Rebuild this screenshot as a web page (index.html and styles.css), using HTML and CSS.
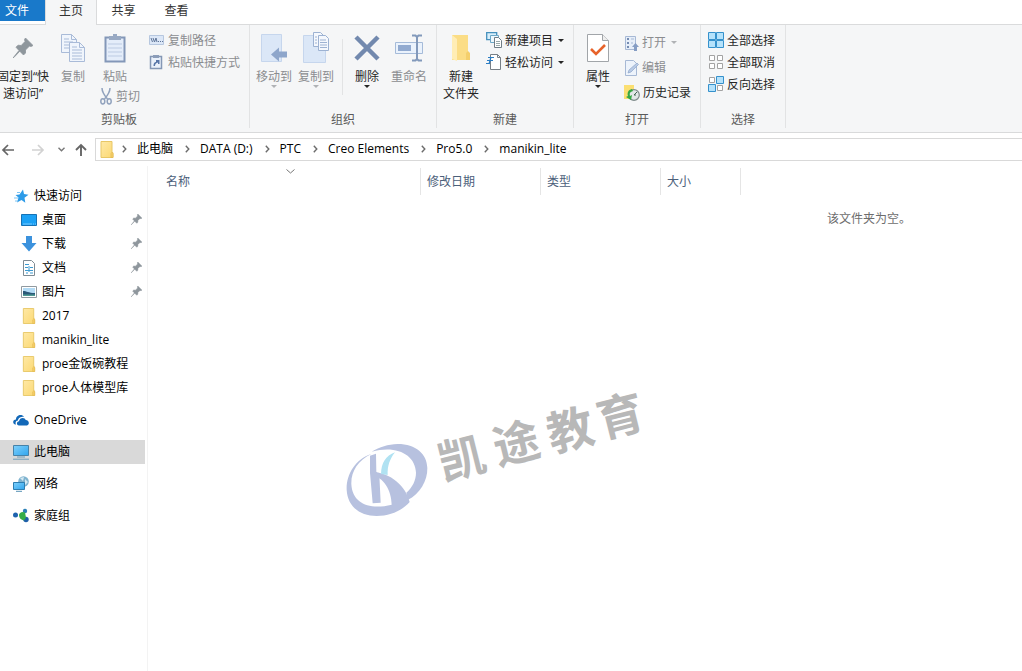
FILE: index.html
```html
<!DOCTYPE html>
<html lang="zh-CN">
<head>
<meta charset="utf-8">
<title>manikin_lite</title>
<link rel="stylesheet" href="styles.css">
</head>
<body>
<svg class="defs" aria-hidden="true">
  <defs>
    <linearGradient id="folder-fill" x1="0" y1="0" x2="1" y2="1"><stop offset="0" stop-color="#ffe9a6"/><stop offset="1" stop-color="#fbd872"/></linearGradient>
    <linearGradient id="screen-fill" x1="0" y1="0" x2="1" y2="1"><stop offset="0" stop-color="#7fd0fb"/><stop offset="1" stop-color="#2fa5ee"/></linearGradient>
    <symbol id="folder" viewBox="0 0 13 17"><path d="M.5.5h11v11l1 1v4H.5z" fill="url(#folder-fill)" stroke="#e8c766"/><path d="M10.500 16.500v-4l1.500-1.500.5 1.500v4z" fill="#f7d06a" stroke="#e0b64c" stroke-width=".6"/></symbol>
    <symbol id="pin" viewBox="0 0 20 20"><path d="M12.500 0 20 7.500 18 8.500 16.500 8 12.500 12 12.500 15 10.500 17 6.800 13.200 1.500 18.800 0 20 1.200 18.500 6 12.500 3 9.200 5 7.200 8.200 7.500 12 3.500 11.500 1.500z" fill="#8e969c" stroke="#8e969c" stroke-width=".8"/></symbol>
    <symbol id="chev" viewBox="0 0 5 8"><path d="M.8.8 3.800 4 .8 7.200" fill="none" stroke="#6b6b6b" stroke-width="1.400"/></symbol>
    <symbol id="drop" viewBox="0 0 6 3"><path d="M0 0h6L3 3z" fill="currentColor"/></symbol>
  </defs>
</svg>

<div class="tabs" role="tablist">
  <button class="tab file">文件</button>
  <button class="tab active">主页</button>
  <button class="tab">共享</button>
  <button class="tab">查看</button>
</div>

<div class="ribbon">
  <section class="group clipboard">
    <div class="tools">
      <button class="big pin-btn"><span class="pic"><svg width="20" height="20"><use href="#pin"/></svg></span>固定到“快<br>速访问”</button>
      <button class="big copy-btn" disabled><span class="pic"><svg width="26" height="30" viewBox="0 0 26 30"><g fill="#f0f5fc" stroke="#a9bbd8"><path d="M1.500 1.500h10l5 5v13h-15z"/><path d="M11.500 1.500v5h5M4 6h5M4 9h9M4 12h9M4 15h9" fill="none"/><path d="M9.500 9.500h10l5 5v14h-15z"/><path d="M19.500 9.500v5h5M12 14h5M12 17h10M12 20h10M12 23h10M12 26h10" fill="none"/></g></svg></span>复制</button>
      <div class="stack">
        <button class="big" disabled><span class="pic"><svg width="22" height="30" viewBox="0 0 22 30"><path d="M1.500 4.500h19v24h-19z" fill="#e4edfa" stroke="#8397b8" stroke-width="2"/><path d="M4 11h14M4 15h14M4 19h14M4 23h14" stroke="#bccbe3"/><path d="M5 7V3h4V1h4v2h4v4z" fill="#98a9c3"/></svg></span>粘贴</button>
        <button class="small cut" disabled><svg width="12" height="17" viewBox="0 0 12 17" fill="none" stroke="#91a2bd" stroke-width="1.500"><path d="M2 0c0 4 2 7 5.500 11M10 0c0 4-2 7-5.500 11"/><ellipse cx="2.800" cy="13.300" rx="2" ry="2.600"/><ellipse cx="9.200" cy="13.300" rx="2" ry="2.600"/></svg>剪切</button>
      </div>
      <div class="rows">
        <button class="small" disabled><svg width="15" height="10" viewBox="0 0 15 10"><path d="M.5.5h14v9H.5z" fill="#dce7f7" stroke="#b6c7df"/><path d="M2 3l1.500 4M4 3l1.500 4L7 3l1 4M9 6.500h1M11 6.500h1M13 6.500h1" fill="none" stroke="#5f7598"/></svg>复制路径</button>
        <button class="small" disabled><svg width="15" height="16" viewBox="0 0 15 16"><path d="M1.500 2.500h11v12h-11z" fill="#eaf1fb" stroke="#8497b5" stroke-width="1.500"/><path d="M4 4V1h6v3z" fill="#8c9db9"/><path d="M4.500 12c0-3 1-4 2.500-4V6l3.500 0v4H9V8.500C7 9 6 10 6 12z" fill="#5876a8"/></svg>粘贴快捷方式</button>
      </div>
    </div>
    <h2>剪贴板</h2>
  </section>

  <section class="group organize">
    <div class="tools">
      <button class="big" disabled><span class="pic"><svg width="28" height="30" viewBox="0 0 28 30"><path d="M1.500 1.500h20v27h-20z" fill="#dbe7f7" stroke="#c6d6ed"/><path d="M11 21.500l8-7v4h8v6h-8v4z" fill="#8ea6cb"/></svg></span>移动到<svg class="drop" width="6" height="3"><use href="#drop"/></svg></button>
      <button class="big" disabled><span class="pic"><svg width="28" height="32" viewBox="0 0 28 32"><path d="M1.500 3.500h22v27h-22z" fill="#dbe7f7" stroke="#c6d6ed"/><g fill="#f5f8fd" stroke="#9db2d2"><path d="M11.500.5h7l3 3v11h-10z"/><path d="M16.500 3.500h7l3 3v12h-10z"/><path d="M13 5h2M13 8h2M13 11h2M18 8h6M18 10.500h7M18 13h7M18 15.500h7"/></g></svg></span>复制到<svg class="drop" width="6" height="3"><use href="#drop"/></svg></button>
      <span class="rule"></span>
      <button class="big"><span class="pic"><svg width="26" height="26" viewBox="0 0 26 26"><path d="M2 2l22 22M24 2 2 24" stroke="#7289ae" stroke-width="4.500"/></svg></span>删除<svg class="drop" width="6" height="3"><use href="#drop"/></svg></button>
      <button class="big" disabled><span class="pic"><svg width="28" height="28" viewBox="0 0 28 28"><path d="M.5 8.500h27v11H.5z" fill="#eaf2fc" stroke="#a5bbd9"/><path d="M3 11h13v6H3z" fill="#91aad0"/><path d="M17 1.500h3.500L22 3l1.500-1.500H27M22 3v22M17 26.500h3.500L22 25l1.500 1.500H27" fill="none" stroke="#8299bb" stroke-width="2"/></svg></span>重命名</button>
    </div>
    <h2>组织</h2>
  </section>

  <section class="group create">
    <div class="tools">
      <button class="big"><span class="pic"><svg width="20" height="28" viewBox="0 0 20 28"><path d="M1 1h16v17l2 2v6H1z" fill="#fbdd86"/><path d="M1 1l5 4v22l-5-2z" fill="#ffedb5"/><path d="M15 26v-7l2-2 2 2v7z" fill="#f4cf6c"/></svg></span>新建<br>文件夹</button>
      <div class="rows">
        <button class="small"><svg width="16" height="16" viewBox="0 0 16 16"><path d="M.7.700h10v7H.7z" fill="#d8effb" stroke="#4691bd" stroke-width="1.300"/><path d="M4.500 3.500h8v7h-8z" fill="#eef8fd" stroke="#6ca7c7"/><path d="M8.500 5.500h4l3 3v7h-7z" fill="#fff" stroke="#707d86"/><path d="M10 9.500h4M10 11.500h4M10 13.500h4" stroke="#9aa"/></svg>新建项目<svg class="side-drop" width="6" height="3"><use href="#drop"/></svg></button>
        <button class="small"><svg width="16" height="16" viewBox="0 0 16 16"><path d="M4.500.5h7l3 3v12h-10z" fill="#fff" stroke="#777f86"/><path d="M11.500.5v3h3" fill="none" stroke="#777f86"/><path d="M2 3.500h6M1 6.500h6M0 9.500h4M5 3L3 10" stroke="#2d7ec4" stroke-width="1.200"/></svg>轻松访问<svg class="side-drop" width="6" height="3"><use href="#drop"/></svg></button>
      </div>
    </div>
    <h2>新建</h2>
  </section>

  <section class="group open">
    <div class="tools">
      <button class="big"><span class="pic"><svg width="22" height="30" viewBox="0 0 22 30"><path d="M.5 1.500h15l6 6v21H.5z" fill="#fff" stroke="#a1a5a9"/><path d="M15.500 1.500v6h6" fill="#eee" stroke="#a1a5a9"/><path d="M4 16l5 5 9-9" fill="none" stroke="#e7632b" stroke-width="2.600"/></svg></span>属性<svg class="drop" width="6" height="3"><use href="#drop"/></svg></button>
      <div class="rows">
        <button class="small" disabled><svg width="15" height="16" viewBox="0 0 15 16"><path d="M1.500 1.500h10v13h-10z" fill="#e6eef9" stroke="#a7b9d5"/><path d="M3 3h2v2H3zM3 7h2v2H3zM3 11h2v2H3z" fill="#758cb2"/><path d="M7 4h3M7 8h2" stroke="#a7b9d5"/><path d="M10 16v-4H8l3.500-4 3.500 4h-2v4z" fill="#859dc4"/></svg>打开<svg class="side-drop" width="6" height="3"><use href="#drop"/></svg></button>
        <button class="small" disabled><svg width="15" height="16" viewBox="0 0 15 16"><path d="M1.500.5h8l3 3v12h-11z" fill="#edf3fb" stroke="#a7b9d5"/><path d="M4 13l1-3 8-7 1.500 1.500L7 12z" fill="#b8cae5" stroke="#8fa6ca" stroke-width=".7"/></svg>编辑</button>
        <button class="small"><svg width="16" height="16" viewBox="0 0 16 16"><path d="M0 0h10v14H0z" fill="#fbdf72"/><circle cx="10" cy="10" r="5.300" fill="#e2e8e7" stroke="#7f8b8b" stroke-width="1.200"/><path d="M10 10l3-3M10 10h2" stroke="#465"/><path d="M8 4C4 5 3 8 4 11L2 12l5 3 1-5-2 1c-1-3 0-4 3-5z" fill="#35a843"/></svg>历史记录</button>
      </div>
    </div>
    <h2>打开</h2>
  </section>

  <section class="group select">
    <div class="tools">
      <div class="rows">
        <button class="small"><svg width="16" height="16" viewBox="0 0 16 16" fill="#b5e2fb" stroke="#3591cc"><path d="M.5.5h7v7h-7zM8.500.5h7v7h-7zM.5 8.500h7v7h-7zM8.500 8.500h7v7h-7z"/></svg>全部选择</button>
        <button class="small"><svg width="16" height="16" viewBox="0 0 16 16" fill="#fff" stroke="#a3a3a3"><path d="M1.500 1.500h5v5h-5zM9.500 1.500h5v5h-5zM1.500 9.500h5v5h-5zM9.500 9.500h5v5h-5z"/></svg>全部取消</button>
        <button class="small"><svg width="16" height="16" viewBox="0 0 16 16"><path d="M1.500 1.500h5v5h-5zM9.500 9.500h5v5h-5z" fill="#fff" stroke="#a3a3a3"/><path d="M8.500.5h7v7h-7zM.5 8.500h7v7h-7z" fill="#b5e2fb" stroke="#3591cc"/></svg>反向选择</button>
      </div>
    </div>
    <h2>选择</h2>
  </section>
</div>

<div class="location">
  <div class="history">
    <button aria-label="后退"><svg width="14" height="12" viewBox="0 0 14 12" fill="none" stroke="#666" stroke-width="1.700"><path d="M13 6H2M7 1 2 6l5 5"/></svg></button>
    <button aria-label="前进"><svg width="14" height="12" viewBox="0 0 14 12" fill="none" stroke="#d2d2d2" stroke-width="1.700"><path d="M1 6h11M7 1l5 5-5 5"/></svg></button>
    <button class="recent" aria-label="最近浏览的位置"><svg width="7" height="5" viewBox="0 0 7 5" fill="none" stroke="#777" stroke-width="1.400"><path d="M.5.8l3 3 3-3"/></svg></button>
    <button class="up" aria-label="上移"><svg width="12" height="14" viewBox="0 0 12 14" fill="none" stroke="#666" stroke-width="1.900"><path d="M6 13V2M1 7l5-5 5 5"/></svg></button>
  </div>
  <nav class="address">
    <svg width="14" height="17"><use href="#folder"/></svg>
    <ol>
      <li><svg width="5" height="8"><use href="#chev"/></svg><a href="#">此电脑</a></li>
      <li><svg width="5" height="8"><use href="#chev"/></svg><a href="#">DATA (D:)</a></li>
      <li><svg width="5" height="8"><use href="#chev"/></svg><a href="#">PTC</a></li>
      <li><svg width="5" height="8"><use href="#chev"/></svg><a href="#">Creo Elements</a></li>
      <li><svg width="5" height="8"><use href="#chev"/></svg><a href="#">Pro5.0</a></li>
      <li><svg width="5" height="8"><use href="#chev"/></svg><a href="#">manikin_lite</a></li>
    </ol>
  </nav>
</div>

<div class="body">
  <nav class="tree">
    <div class="branch">
      <a class="node" href="#"><svg width="16" height="16" viewBox="0 0 16 16"><path d="M10 1.500l1 4.500 4.500.7-4 3 .8 5L8.500 12 4 14.500l1.500-5L2.500 7l4-.5z" fill="#2c9be8"/><path d="M1 10h4M2 13h3M4 4.500h3" stroke="#7cc4f3"/></svg>快速访问</a>
      <a class="node leaf" href="#"><svg width="16" height="16" viewBox="0 0 16 16"><path d="M.5 2.500h15v11H.5z" fill="#1ba1f5" stroke="#1672b5"/><path d="M2 12h9M12 12h1M14 12h1" stroke="#8fd3ff" stroke-width=".8"/></svg>桌面<svg class="pinned" width="11" height="11"><use href="#pin"/></svg></a>
      <a class="node leaf" href="#"><svg width="16" height="16" viewBox="0 0 16 16"><path d="M5 0h6v7h4.500L8 15.500.5 7H5z" fill="#3c92dd"/></svg>下载<svg class="pinned" width="11" height="11"><use href="#pin"/></svg></a>
      <a class="node leaf" href="#"><svg width="16" height="16" viewBox="0 0 16 16"><path d="M2.500.5h8l3 3v12h-11z" fill="#fff" stroke="#7f8b93"/><path d="M4 4.500h4M4 7.500h3M9 7.500h3M4 10.500h8M5 13h2M9 13h3M8 6v6" stroke="#3d9ad0"/></svg>文档<svg class="pinned" width="11" height="11"><use href="#pin"/></svg></a>
      <a class="node leaf" href="#"><svg width="16" height="16" viewBox="0 0 16 16"><path d="M.5 2.500h15v11H.5z" fill="#fff" stroke="#919aa0"/><path d="M2 4h12v8H2z" fill="#b3dbf5"/><path d="M2 7c4 0 5 2 12 2v3H2z" fill="#2b5878"/><path d="M2 10.500h12V12H2z" fill="#4e9a92"/></svg>图片<svg class="pinned" width="11" height="11"><use href="#pin"/></svg></a>
      <a class="node leaf" href="#"><svg width="16" height="16"><use href="#folder"/></svg>2017</a>
      <a class="node leaf" href="#"><svg width="16" height="16"><use href="#folder"/></svg>manikin_lite</a>
      <a class="node leaf" href="#"><svg width="16" height="16"><use href="#folder"/></svg>proe金饭碗教程</a>
      <a class="node leaf" href="#"><svg width="16" height="16"><use href="#folder"/></svg>proe人体模型库</a>
    </div>
    <a class="node" href="#"><svg width="16" height="16" viewBox="0 0 16 16"><path d="M2 12.500C-1 11 0 7.500 3 7.500 3 3 9 1.500 11 5 7 4 5 7 5 8.500c-2 0-3 2-2 4z" fill="#1268b8"/><path d="M6 13.500c-3-.5-2.500-4 0-4.200C6.500 5 12 5 12.700 8c3.500 0 4.300 4.500 1.300 5.500z" fill="#1268b8"/></svg>OneDrive</a>
    <a class="node current" href="#"><svg width="16" height="16" viewBox="0 0 16 16"><path d="M.5 1.500h15v10H.5z" fill="url(#screen-fill)" stroke="#4682a8"/><path d="M4 13h8M0 15.200h16" stroke="#6f9db8"/></svg>此电脑</a>
    <a class="node" href="#"><svg width="16" height="16" viewBox="0 0 16 16"><circle cx="10.500" cy="5.500" r="5.300" fill="#7fb3cf"/><path d="M7 2l4-1-1 4zM12 3l3 3-3 3z" fill="#d5e9f2"/><path d="M.5 6.500h11v7H.5z" fill="url(#screen-fill)" stroke="#2d7eb1"/><path d="M3 15.300h6" stroke="#5590b3"/></svg>网络</a>
    <a class="node" href="#"><svg width="16" height="16" viewBox="0 0 16 16"><circle cx="2.500" cy="7" r="2.500" fill="#1e62ae"/><circle cx="12" cy="3" r="2.200" fill="#2a7fb6"/><circle cx="13" cy="11.500" r="2.700" fill="#1e5fa9"/><path d="M6 7c0-2 3-4 6-2.500l1 5-2 3C8 12 6 10 6 7z" fill="#35ac48"/></svg>家庭组</a>
  </nav>

  <main class="content">
    <svg class="sort" width="9" height="5" viewBox="0 0 9 5" fill="none" stroke="#777"><path d="M.5.5l4 3.500 4-3.500"/></svg>
    <table>
      <thead>
        <tr><th class="name">名称</th><th class="wide">修改日期</th><th class="wide">类型</th><th class="size">大小</th><th class="rest"></th></tr>
      </thead>
      <tbody>
        <tr><td class="empty" colspan="5">该文件夹为空。</td></tr>
      </tbody>
    </table>
    <svg class="watermark" width="340" height="160" viewBox="0 0 1020 480">
      <g fill="#b7c1df">
        <path d="M124 222C75 238 48 285 50 330c3 50 40 78 90 78 42 0 78-18 99-42-10-45-55-90-117-91v8c40 10 62 48 63 91-65 16-118-2-121-62-1-38 20-71 60-90z"/>
        <path d="M125 215c25-14 48-22 78-23 55 0 88 30 89 72 1 38-22 78-59 96l-4-22c18-16 29-37 29-60-2-54-58-84-133-63z"/>
        <path d="M120 227l18-6 1 54 9 10 4 83-24 2-8-92z"/>
      </g>
      <path d="M195 217c-28 10-41 32-42 65l20 3c-1-27 6-47 22-68z" fill="#b0e2f2"/>
      <g class="brush">
        <text transform="translate(393 226) rotate(-14)">凯</text>
        <text transform="translate(556 180) rotate(-14)">途</text>
        <text transform="translate(718 140) rotate(-14)">教</text>
        <text transform="translate(868 98) rotate(-14)">育</text>
      </g>
    </svg>
  </main>
</div>
</body>
</html>
```
FILE: styles.css
```css
* { box-sizing: border-box; }

body {
  margin: 0;
  min-height: 100vh;
  display: flex;
  flex-direction: column;
  overflow: hidden;
  background: #fff;
  color: #000;
  font: 12px/17px "Open Sans", "Noto Sans CJK SC", sans-serif;
}

svg { display: block; flex: none; }
.defs { position: absolute; width: 0; height: 0; }

button {
  margin: 0;
  padding: 0;
  border: 0;
  background: none;
  font: inherit;
  color: #262626;
  white-space: nowrap;
}
button:disabled { color: #8b8d90; }
button:disabled .drop, button:disabled .side-drop { color: #b0b2b5; }
a { color: inherit; text-decoration: none; }

/* Tabs */
.tabs {
  display: flex;
  align-items: flex-start;
  height: 25px;
  border-bottom: 1px solid #dadbdc;
}
.tab { width: 53px; height: 21px; color: #333; }
.tab.file { width: 45px; padding-right: 11px; background: #1979ca; color: #fff; }
.tab.active {
  width: 52px;
  height: 25px;
  padding-bottom: 4px;
  border: solid #dadbdc;
  border-width: 0 1px;
  background: #f5f6f7;
}

/* Ribbon */
.ribbon {
  display: flex;
  height: 108px;
  background: #f5f6f7;
  border-bottom: 1px solid #d9dadb;
}
.group {
  display: flex;
  flex-direction: column;
  flex: none;
  margin-bottom: 4px;
  border-right: 1px solid #e2e3e4;
}
.group h2 {
  margin: 0;
  font-size: 12px;
  font-weight: 400;
  line-height: 17px;
  color: #5a5a5a;
  text-align: center;
}
.tools { display: flex; align-items: flex-start; height: 87px; }
.clipboard { width: 261px; margin-left: -11px; }
.clipboard .tools { padding-left: 6px; }
.organize { width: 187px; }
.organize .tools { padding-left: 3px; }
.create { width: 137px; }
.create .tools, .open .tools { padding-left: 4px; }
.open { width: 127px; }
.select { width: 85px; }
.select .tools { padding-left: 7px; }

.big {
  display: flex;
  flex-direction: column;
  align-items: center;
  width: 42px;
  padding-top: 7px;
}
.pic {
  display: flex;
  align-items: center;
  justify-content: center;
  height: 32px;
  margin-bottom: 4px;
}
.create .big { display: block; width: 40px; }
.open .big { width: 40px; }
.pin-btn { display: block; width: 56px; }
.copy-btn { width: 44px; }
.stack { width: 54px; }
.stack .big { width: 40px; }
.cut { padding-left: 5px; }
.rule { width: 1px; height: 56px; margin: 14px 3px 0 5px; background: #e2e3e4; }

.rows { display: flex; flex-direction: column; padding-top: 4px; }
.small { display: flex; align-items: center; gap: 4px; height: 22px; }
.create .rows { padding-left: 5px; }
.create .small, .select .small { gap: 3px; }
.open .rows { padding: 5px 0 0 6px; }
.open .small { gap: 3px; height: 25px; }
.side-drop { margin-left: 2px; }

/* Location bar */
.location { display: flex; align-items: center; height: 33px; }
.history { display: flex; align-items: center; width: 95px; padding-left: 1px; }
.history button { width: 30px; }
.history .recent { width: 14px; }
.history .up { width: 20px; }
.history .recent svg { margin-left: -3px; }
.address {
  display: flex;
  align-items: center;
  flex: 1;
  height: 23px;
  padding-left: 4px;
  border: 1px solid #d9d9d9;
  border-right: 0;
}
.address ol { display: flex; margin: 0; padding: 0 0 2px 8px; list-style: none; }
.address li { display: flex; align-items: center; gap: 10px; margin-right: 12px; white-space: nowrap; }

/* Panes */
.body { display: flex; flex: 1; }
.tree {
  display: flex;
  flex-direction: column;
  gap: 8px;
  width: 148px;
  padding: 18px 2px 0 0;
  border-right: 1px solid #f3f3f3;
}
.branch { display: flex; flex-direction: column; }
.node {
  display: flex;
  align-items: center;
  gap: 5px;
  height: 24px;
  padding: 0 0 1px 13px;
  white-space: nowrap;
}
.node.leaf { padding-left: 21px; }
.node.current { background: #d9d9d9; }
.pinned { margin: 0 3px 0 auto; }

.content { position: relative; flex: 1; padding-top: 2px; }
table { width: 100%; border-collapse: separate; border-spacing: 0; table-layout: fixed; }
th {
  height: 27px;
  padding: 0 0 0 6px;
  border-right: 1px solid #e5e5e5;
  color: #4c607a;
  font-weight: 400;
  text-align: left;
}
.name { width: 273px; padding-left: 18px; }
.wide { width: 120px; }
.size { width: 80px; }
.rest { border: 0; }
.empty { padding: 15px 0 0 679px; color: #6d6d6d; }
.sort { position: absolute; left: 138px; top: 3px; }

.watermark { position: absolute; left: 182px; top: 214px; overflow: visible; }
.brush text {
  font: 700 140px "Noto Sans CJK SC", sans-serif;
  fill: #b8b8b8;
  text-anchor: middle;
  dominant-baseline: central;
}
```
